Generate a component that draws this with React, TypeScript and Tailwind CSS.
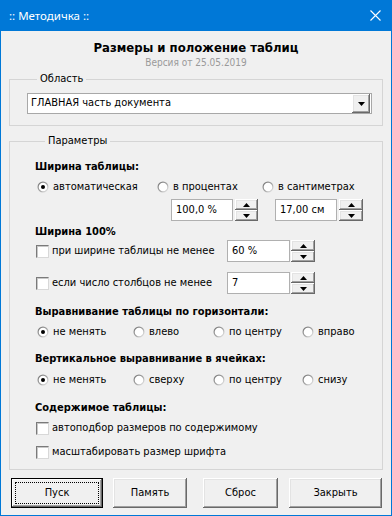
import React from "react";

const F = { fontFamily: '"DejaVu Sans Condensed", "DejaVu Sans", sans-serif', fontStretch: "condensed" as const };

function Radio({ checked }: { checked?: boolean }) {
  return (
    <svg width="12" height="12" viewBox="0 0 12 12" className="shrink-0">
      <defs>
        <linearGradient id="rg" x1="0" y1="0" x2="1" y2="1">
          <stop offset="0" stopColor="#6e6e6e" />
          <stop offset="0.55" stopColor="#a8a8a8" />
          <stop offset="1" stopColor="#f4f4f4" />
        </linearGradient>
      </defs>
      <circle cx="6" cy="6" r="5.5" fill="url(#rg)" />
      <circle cx="6" cy="6" r="4.3" fill="#fff" />
      {checked && <circle cx="6" cy="6" r="2" fill="#000" />}
    </svg>
  );
}

function Check() {
  return (
    <span className="shrink-0 w-[13px] h-[13px] bg-white border border-t-[#7a7a7a] border-l-[#7a7a7a] border-r-[#d8d8d8] border-b-[#d8d8d8] shadow-[inset_1px_1px_#c8c8c8]" />
  );
}

function Tri({ up }: { up?: boolean }) {
  return (
    <svg width="7" height="4" viewBox="0 0 7 4">
      {up ? <polygon points="3.5,0 7,4 0,4" fill="#000" /> : <polygon points="0,0 7,0 3.5,4" fill="#000" />}
    </svg>
  );
}

function SpinHalf({ up }: { up?: boolean }) {
  return (
    <div className="h-[11px] flex items-center justify-center bg-[#f0f0f0] shadow-[inset_-1px_-1px_#696969,inset_1px_1px_#ffffff,inset_-2px_-2px_#a0a0a0,inset_2px_2px_#e3e3e3]">
      <Tri up={up} />
    </div>
  );
}

function Spinner({ value, w, sw, gap }: { value: string; w: string; sw: string; gap: string }) {
  return (
    <div className={`flex items-center ${gap}`}>
      <div className={`${w} h-[22px] bg-white border border-[#b0b0b0] flex items-center pl-[4px] text-[11px] text-black`}>
        {value}
      </div>
      <div className={`${sw} flex flex-col`}>
        <SpinHalf up />
        <SpinHalf />
      </div>
    </div>
  );
}

function Btn({ label, w, def }: { label: string; w: string; def?: boolean }) {
  if (def) {
    return (
      <div className={`${w} h-[30px] border border-black bg-[#f0f0f0] shadow-[inset_-1px_-1px_#696969,inset_1px_1px_#ffffff,inset_-2px_-2px_#a0a0a0] p-[3px]`}>
        <div className="w-full h-full border border-dotted border-black flex items-center justify-center text-[11px] text-black">
          {label}
        </div>
      </div>
    );
  }
  return (
    <div className={`${w} h-[30px] bg-[#f0f0f0] flex items-center justify-center text-[11px] text-black shadow-[inset_-1px_-1px_#696969,inset_1px_1px_#ffffff,inset_-2px_-2px_#a0a0a0,inset_2px_2px_#e3e3e3]`}>
      {label}
    </div>
  );
}

const H = "text-[11px] leading-[14px] font-bold text-black";
const T = "text-[11px] text-black";

export default function App() {
  return (
    <div className="w-[392px] h-[516px] bg-[#0078d7] flex flex-col px-[1px] pb-[1px]" style={F}>
      <div className="h-[31px] flex items-center justify-between pl-[8px] pr-[10px] text-white">
        <span className="text-[11.5px]" style={{ fontFamily: '"Noto Sans", "Liberation Sans", sans-serif' }}>
          :: Методичка ::
        </span>
        <svg width="11" height="11" viewBox="0 0 11 11">
          <path d="M0.5 0.5 L10.5 10.5 M10.5 0.5 L0.5 10.5" stroke="#fff" strokeWidth="1.1" />
        </svg>
      </div>
      <div className="flex-1 bg-[#f0f0f0] flex flex-col px-[8px]">
        <div className="mt-[9px] text-center text-[13px] leading-[16px] font-bold text-black">
          Размеры и положение таблиц
        </div>
        <div className="mt-[1px] text-center text-[10px] leading-[12px] text-[#9a9a9a]">Версия от 25.05.2019</div>

        <fieldset className="mt-[3px] border border-[#d5d5d5] pl-[17px] pr-[9px] pb-[11px]">
          <legend className="ml-[10px] px-[3px] text-[11px] leading-[14px] text-black">Область</legend>
          <div className="mt-[7px] h-[21px] w-[345px] bg-white border border-[#a8a8a8] flex items-center justify-between pl-[3px] pr-[1px]">
            <span className={T}>ГЛАВНАЯ часть документа</span>
            <div className="w-[18px] h-[19px] flex items-center justify-center bg-[#f0f0f0] shadow-[inset_-1px_-1px_#696969,inset_1px_1px_#ffffff,inset_-2px_-2px_#a0a0a0,inset_2px_2px_#e3e3e3]">
              <Tri />
            </div>
          </div>
        </fieldset>

        <fieldset className="mt-[8px] border border-[#d5d5d5] pl-[25px] pr-[9px] pb-[7px]">
          <legend className="ml-[10px] px-[3px] text-[11px] leading-[14px] text-black">Параметры</legend>

          <div className={`mt-[12px] ${H}`}>Ширина таблицы:</div>
          <div className={`mt-[3px] h-[20px] flex items-center ${T}`}>
            <div className="w-[122px] flex items-center gap-[4px] pl-[2px]"><Radio checked />автоматическая</div>
            <div className="w-[105px] flex items-center gap-[4px]"><Radio />в процентах</div>
            <div className="flex items-center gap-[4px]"><Radio />в сантиметрах</div>
          </div>
          <div className="mt-[2px] flex items-center pl-[136px] h-[22px]">
            <Spinner value="100,0 %" w="w-[62px]" sw="w-[23px]" gap="gap-[2px]" />
            <div className="w-[17px]" />
            <Spinner value="17,00 см" w="w-[62px]" sw="w-[24px]" gap="gap-[2px]" />
          </div>

          <div className={`mt-[4px] ${H}`}>Ширина 100%</div>
          <div className={`mt-[1px] h-[22px] flex items-center ${T}`}>
            <div className="w-[192px] flex items-center gap-[3px] pl-[1px]"><Check />при ширине таблицы не менее</div>
            <Spinner value="60 %" w="w-[63px]" sw="w-[24px]" gap="gap-[1px]" />
          </div>
          <div className={`mt-[10px] h-[22px] flex items-center ${T}`}>
            <div className="w-[192px] flex items-center gap-[3px] pl-[1px]"><Check />если число столбцов не менее</div>
            <Spinner value="7" w="w-[63px]" sw="w-[24px]" gap="gap-[1px]" />
          </div>

          <div className={`mt-[11px] ${H}`}>Выравнивание таблицы по горизонтали:</div>
          <div className={`mt-[3px] h-[20px] flex items-center ${T}`}>
            <div className="w-[98px] flex items-center gap-[4px] pl-[2px]"><Radio checked />не менять</div>
            <div className="w-[80px] flex items-center gap-[4px]"><Radio />влево</div>
            <div className="w-[89px] flex items-center gap-[4px]"><Radio />по центру</div>
            <div className="flex items-center gap-[4px]"><Radio />вправо</div>
          </div>

          <div className={`mt-[10px] ${H}`}>Вертикальное выравнивание в ячейках:</div>
          <div className={`mt-[4px] h-[20px] flex items-center ${T}`}>
            <div className="w-[98px] flex items-center gap-[4px] pl-[2px]"><Radio checked />не менять</div>
            <div className="w-[80px] flex items-center gap-[4px]"><Radio />сверху</div>
            <div className="w-[89px] flex items-center gap-[4px]"><Radio />по центру</div>
            <div className="flex items-center gap-[4px]"><Radio />снизу</div>
          </div>

          <div className={`mt-[11px] ${H}`}>Содержимое таблицы:</div>
          <div className={`mt-[3px] h-[20px] flex items-center gap-[3px] pl-[1px] ${T}`}>
            <Check />автоподбор размеров по содержимому
          </div>
          <div className={`mt-[4px] h-[20px] flex items-center gap-[3px] pl-[1px] ${T}`}>
            <Check />масштабировать размер шрифта
          </div>
        </fieldset>

        <div className="mt-[8px] flex items-center pl-[2px]">
          <Btn label="Пуск" w="w-[92px]" def />
          <div className="w-[10px]" />
          <Btn label="Память" w="w-[74px]" />
          <div className="w-[16px]" />
          <Btn label="Сброс" w="w-[75px]" />
          <div className="w-[11px]" />
          <Btn label="Закрыть" w="w-[93px]" />
        </div>
      </div>
    </div>
  );
}
